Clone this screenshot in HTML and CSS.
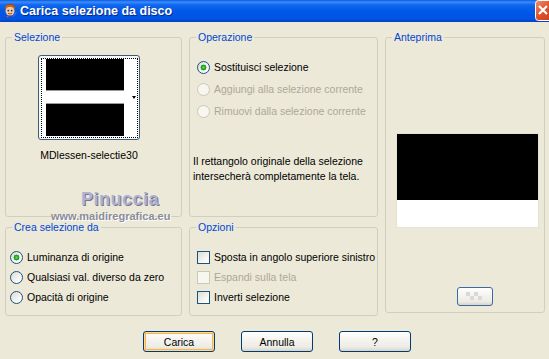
FILE: index.html
```html
<!DOCTYPE html>
<html lang="it">

<head>
    <meta charset="UTF-8">
    <meta name="viewport" content="width=device-width, initial-scale=1.0">
    <title>Carica selezione da disco</title>
    <link rel="stylesheet" href="styles.css">
</head>

<body>
    <div class="window">

        <div class="titlebar">
            <svg class="app-icon" width="16" height="16" viewBox="0 0 16 16">
                <path d="M3 6 Q2 1 8 1 Q14 1 13 6 Z" fill="#8a4a1c" />
                <circle cx="8" cy="8" r="4.5" fill="#f3c89a" />
                <path d="M3 6 Q5 3 8 4 Q11 3 13 6 L13 4 Q10 1 8 2 Q5 1 3 4 Z" fill="#c8621e" />
                <circle cx="6.3" cy="7.6" r="0.9" fill="#2b2b6a" />
                <circle cx="9.7" cy="7.6" r="0.9" fill="#2b2b6a" />
                <path d="M6 10.3 Q8 11.8 10 10.3" stroke="#b03020" stroke-width="0.9" fill="none" />
                <path d="M10 13 L14 9 L15 10 L11 14 Z" fill="#3a6ad8" />
                <path d="M4 13 L7 12.5 L6 15 Z" fill="#e04828" />
            </svg>
            <span class="title">Carica selezione da disco</span>
            <svg class="close-btn" width="14" height="21" viewBox="0 0 14 21">
                <defs>
                    <linearGradient id="closeFill" x1="0" y1="0" x2="1" y2="1">
                        <stop offset="0" stop-color="#f09070" />
                        <stop offset="0.45" stop-color="#e0542c" />
                        <stop offset="1" stop-color="#c43a16" />
                    </linearGradient>
                </defs>
                <rect x="0.5" y="0.5" width="20" height="20" rx="3" fill="url(#closeFill)" stroke="#fff" />
                <path d="M4 6 L12 14 M12 6 L4 14" stroke="#fff" stroke-width="2.2" />
            </svg>
        </div>

        <div class="groups">

            <fieldset class="group">
                <legend>Selezione</legend>
                <div class="thumb">
                    <div class="focus">
                        <div class="thumb-img">
                            <div class="thumb-black"></div>
                            <div class="thumb-band"></div>
                            <div class="thumb-black thumb-low"></div>
                        </div>
                        <div class="thumb-strip"></div>
                        <span class="thumb-arrow"></span>
                    </div>
                </div>
                <div class="file-name">MDlessen-selectie30</div>
                <div class="mark-name">Pinuccia</div>
                <div class="mark-site">www.maidiregrafica.eu</div>
            </fieldset>

            <fieldset class="group">
                <legend>Operazione</legend>
                <div class="options op-list">
                    <label class="row"><input type="radio" name="op" checked> Sostituisci selezione</label>
                    <label class="row disabled"><input type="radio" name="op" disabled> Aggiungi alla selezione corrente</label>
                    <label class="row disabled"><input type="radio" name="op" disabled> Rimuovi dalla selezione corrente</label>
                </div>
                <p class="note">Il rettangolo originale della selezione<br>intersecherà completamente la tela.</p>
            </fieldset>

            <fieldset class="group preview-group">
                <legend>Anteprima</legend>
                <div class="preview">
                    <div class="preview-black"></div>
                </div>
                <button class="btn small-btn" type="button">
                    <svg width="18" height="9" viewBox="0 0 18 9">
                        <rect x="0" y="0" width="4" height="4" fill="#d9d9d9" />
                        <rect x="8" y="0" width="4" height="4" fill="#d9d9d9" />
                        <rect x="4" y="4" width="4" height="4" fill="#d9d9d9" />
                        <rect x="12" y="4" width="4" height="4" fill="#d9d9d9" />
                    </svg>
                </button>
            </fieldset>

            <fieldset class="group">
                <legend>Crea selezione da</legend>
                <div class="options low-list">
                    <label class="row short"><input type="radio" name="src" checked> Luminanza di origine</label>
                    <label class="row short"><input type="radio" name="src"> Qualsiasi val. diverso da zero</label>
                    <label class="row short"><input type="radio" name="src"> Opacità di origine</label>
                </div>
            </fieldset>

            <fieldset class="group">
                <legend>Opzioni</legend>
                <div class="options low-list opt-list">
                    <label class="row short"><input type="checkbox"> Sposta in angolo superiore sinistro</label>
                    <label class="row short disabled"><input type="checkbox" disabled> Espandi sulla tela</label>
                    <label class="row short"><input type="checkbox"> Inverti selezione</label>
                </div>
            </fieldset>

        </div>

        <div class="buttons">
            <button class="btn default" type="button">Carica</button>
            <button class="btn" type="button">Annulla</button>
            <button class="btn" type="button">?</button>
        </div>

    </div>
</body>

</html>
```

FILE: styles.css
```css
body {
    margin: 0;
    background-color: #ece9d8;
    font-family: "Liberation Sans", Arial, sans-serif;
    font-size: 10.5px;
    color: #000;
}

.window {
    width: 549px;
    height: 359px;
    overflow: hidden;
}

.titlebar {
    height: 22px;
    display: flex;
    align-items: center;
    background: linear-gradient(to bottom, #0a5ae0 0%, #3b8cfb 9%, #1068ef 22%, #0058e6 50%, #0054e2 85%, #0043c4 100%);
}

.app-icon {
    margin-left: 2px;
    flex: none;
}

.title {
    margin-left: 2px;
    color: white;
    font-size: 12.5px;
    font-weight: bold;
    text-shadow: 1px 1px 0 #0b2a8a;
    flex: 1;
}

.close-btn {
    display: block;
    margin-top: -1px;
    flex: none;
}

.groups {
    display: grid;
    grid-template-columns: 177px 189px 160px;
    grid-template-rows: 186px 95px;
    column-gap: 7px;
    row-gap: 4px;
    padding: 9px 0 0 5px;
}

.group {
    position: relative;
    margin: 0;
    padding: 0;
    min-width: 0;
    border: 1px solid #d0d0bf;
    border-radius: 3px;
}

.group legend {
    margin-left: 6px;
    padding: 0 2px;
    color: #0046d5;
    line-height: 13px;
}

/* selezione */

.thumb {
    width: 102px;
    height: 85px;
    margin: 11px 0 0 32px;
    border: 1px solid #3c5a7a;
    border-radius: 3px;
    background-color: #f7f7f4;
    padding: 2px 1px 0 2px;
    box-sizing: border-box;
}

.focus {
    position: relative;
    height: 80px;
    border: 1px dotted #000;
    background-color: white;
    display: flex;
    padding-left: 4px;
    box-sizing: border-box;
}

.thumb-img {
    width: 78px;
    height: 77px;
    display: flex;
    flex-direction: column;
}

.thumb-black {
    height: 31px;
    background-color: #000;
    border-bottom: 1px solid #9a9a9a;
}

.thumb-band {
    height: 12px;
    background-color: white;
}

.thumb-low {
    height: 32px;
    border-bottom: none;
    border-top: 1px solid #9a9a9a;
}

.thumb-strip {
    width: 9px;
    height: 77px;
    background-color: white;
}

.thumb-arrow {
    position: absolute;
    right: 1px;
    top: 37px;
    border-left: 2px solid transparent;
    border-right: 2px solid transparent;
    border-top: 3px solid #000;
}

.file-name {
    width: 102px;
    margin: 9px 0 0 32px;
    text-align: center;
    line-height: 13px;
}

.mark-name {
    position: absolute;
    left: 75px;
    top: 145px;
    font-size: 18px;
    font-weight: bold;
    letter-spacing: 0.5px;
    color: #b0b0d0;
    text-shadow: 1px 1px 0 #77778f;
}

.mark-site {
    position: absolute;
    left: 45px;
    top: 166px;
    font-size: 11px;
    font-weight: bold;
    color: #8c8c9c;
    text-shadow: 1px 1px 0 #fff;
}

/* radio and checkbox rows */

.options {
    display: flex;
    flex-direction: column;
}

.op-list {
    margin-top: 12px;
    padding-left: 7px;
}

.low-list {
    margin-top: 13px;
    padding-left: 4px;
}

.opt-list {
    padding-left: 7px;
}

.row {
    height: 22px;
    display: flex;
    align-items: center;
    gap: 1px;
}

.row.short {
    height: 20px;
}

.row.disabled {
    color: #aca899;
}

input[type="radio"],
input[type="checkbox"] {
    appearance: none;
    width: 13px;
    height: 13px;
    margin: 0 3px 0 0;
    border: 1px solid #1c5180;
    background: linear-gradient(135deg, #dcdcd7 0%, #f4f4f0 60%, #fff 100%);
    flex: none;
}

input[type="radio"] {
    border-radius: 50%;
}

input[type="radio"]:checked {
    background: radial-gradient(circle, #6ae06a 0, #21a121 2px, #2a9b2a 2.7px, transparent 3.2px),
        linear-gradient(135deg, #dcdcd7 0%, #f4f4f0 60%, #fff 100%);
}

input:disabled {
    border-color: #cac8bb;
    background: #f7f6ef;
}

.note {
    margin: 32px 0 0 3px;
    line-height: 15px;
}

/* anteprima */

.preview-group {
    grid-row: 1 / 3;
    grid-column: 3;
    align-self: start;
    height: 282px;
    box-sizing: border-box;
}

.preview {
    width: 141px;
    height: 93px;
    margin: 90px 0 0 11px;
    background-color: white;
    box-shadow: 0 0 0 1px #e6e3d3;
}

.preview-black {
    height: 66px;
    background-color: #000;
}

.btn {
    width: 72px;
    height: 21px;
    padding: 0;
    border: 1px solid #003c74;
    border-radius: 3px;
    background: linear-gradient(to bottom, #fff 0%, #f5f4ef 40%, #ecebe5 80%, #d8d3c6 100%);
    font-family: "Liberation Sans", Arial, sans-serif;
    font-size: 10.5px;
    color: #000;
}

.btn.default {
    box-shadow: inset 0 0 0 1px #ffd99a, inset 0 0 0 2px #f7b54a;
}

.small-btn {
    display: flex;
    align-items: center;
    justify-content: center;
    width: 36px;
    height: 19px;
    margin: 60px 0 0 71px;
    border-color: #3d6aa4;
}

.buttons {
    display: flex;
    gap: 26px;
    margin-top: 15px;
    padding-left: 143px;
}
```
